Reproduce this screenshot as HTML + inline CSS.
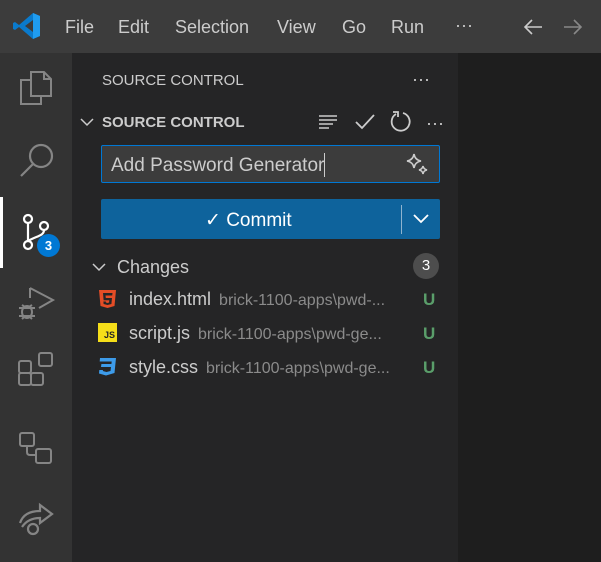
<!DOCTYPE html><html><head><style>
*{margin:0;padding:0;box-sizing:border-box}
body{width:601px;height:562px;overflow:hidden;background:#1e1e1e;font-family:"Segoe UI","Liberation Sans",sans-serif;position:relative;color:#ccc}
.a{position:absolute}
.t{font-size:18px;color:#ccc;top:17px}
svg{position:absolute;overflow:visible}
</style></head><body>
<div class="a" style="left:0;top:0;width:601px;height:53px;background:#3c3c3c"></div>
<svg style="left:13px;top:12px" width="28" height="28" viewBox="0 0 28 28"><path d="M20 1 L27 4 V24 L20 27 L6 15 L2 18 L0 17 V11 L2 10 L6 13 Z M20 8 L12 14 L20 20 Z" fill="#0a7acc"/><path d="M20 1 L27 4 V24 L20 27 Z" fill="#1f9cf0"/></svg>
<div class="a t" style="left:65px">File</div>
<div class="a t" style="left:118px">Edit</div>
<div class="a t" style="left:175px">Selection</div>
<div class="a t" style="left:277px">View</div>
<div class="a t" style="left:342px">Go</div>
<div class="a t" style="left:391px">Run</div>
<div class="a t" style="left:455px;top:15px">···</div>
<svg style="left:523px;top:18px" width="20" height="18"><path d="M19 9H2M9 2L2 9L9 16" stroke="#ccc" stroke-width="1.6" fill="none"/></svg>
<svg style="left:563px;top:18px" width="20" height="18"><path d="M1 9H18M11 2L18 9L11 16" stroke="#888" stroke-width="1.6" fill="none"/></svg>
<div class="a" style="left:0;top:53px;width:72px;height:509px;background:#333"></div>
<div class="a" style="left:72px;top:53px;width:386px;height:509px;background:#252526"></div>
<div class="a" style="left:0;top:197px;width:3px;height:71px;background:#fff"></div>
<svg style="left:19px;top:70px" width="34" height="36" stroke="#858585" stroke-width="2" fill="none"><path d="M12 2H25L32 9V26H12Z M25 2V9H32"/><path d="M12 10H2V34H22V26"/></svg>
<svg style="left:19px;top:142px" width="36" height="36" stroke="#858585" stroke-width="2.2" fill="none"><circle cx="22" cy="14" r="11"/><path d="M14 22L2 34"/></svg>
<svg style="left:22px;top:214px" width="30" height="36" stroke="#fff" stroke-width="2.2" fill="none"><circle cx="6" cy="5" r="4"/><circle cx="6" cy="31" r="4"/><circle cx="22" cy="12" r="4"/><path d="M6 9V27M22 16C22 22 14 22 6 27"/></svg>
<div class="a" style="left:37px;top:234px;width:23px;height:23px;border-radius:50%;background:#0078d4;color:#fff;font-size:13px;font-weight:bold;text-align:center;line-height:23px">3</div>
<svg style="left:17px;top:286px" width="38" height="36" stroke="#858585" stroke-width="2" fill="none"><path d="M13 2L36 14L22 22M13 2V12"/><ellipse cx="10" cy="26" rx="5" ry="6"/><path d="M2 22H18M2 30H18M5 19L8 21M15 19L12 21M5 33L7 31M15 33L13 31"/></svg>
<svg style="left:18px;top:352px" width="38" height="38" stroke="#858585" stroke-width="2" fill="none"><rect x="1" y="9" width="12" height="12" rx="2"/><rect x="1" y="21" width="12" height="12" rx="2"/><rect x="13" y="21" width="12" height="12" rx="2"/><rect x="21" y="1" width="13" height="13" rx="2"/></svg>
<svg style="left:19px;top:432px" width="36" height="36" stroke="#858585" stroke-width="2" fill="none"><rect x="1" y="1" width="14" height="13" rx="2"/><rect x="17" y="17" width="15" height="14" rx="2"/><path d="M8 14V20Q8 23 11 23H17"/></svg>
<svg style="left:18px;top:501px" width="38" height="36" stroke="#858585" stroke-width="2.2" fill="none"><path d="M2 22Q6 10 22 10V4L34 13L22 22V17Q10 17 4 26"/><circle cx="15" cy="28" r="5"/></svg>
<div class="a" style="left:102px;top:72px;font-size:15px;color:#ccc">SOURCE CONTROL</div>
<div class="a" style="left:412px;top:69px;font-size:18px;color:#ccc">···</div>
<svg style="left:80px;top:117px" width="14" height="10"><path d="M1 2L7 8L13 2" stroke="#ccc" stroke-width="1.5" fill="none"/></svg>
<div class="a" style="left:102px;top:114px;font-size:15px;font-weight:bold;color:#ccc">SOURCE CONTROL</div>
<svg style="left:318px;top:114px" width="20" height="16" stroke="#ccc" stroke-width="1.5"><path d="M1 2H19M1 6H19M1 10H15M1 14H11"/></svg>
<svg style="left:355px;top:113px" width="20" height="17"><path d="M1 9L7 15L19 2" stroke="#ccc" stroke-width="1.8" fill="none"/></svg>
<svg style="left:390px;top:111px" width="21" height="21" stroke="#ccc" stroke-width="1.8" fill="none"><path d="M6 3A9 9 0 1 0 13 2"/><path d="M3 1H8V6"/></svg>
<div class="a" style="left:426px;top:113px;font-size:18px;color:#ccc">···</div>
<div class="a" style="left:101px;top:145px;width:339px;height:38px;background:#3c3c3c;border:1px solid #0078d4;border-radius:2px"></div>
<div class="a" style="left:111px;top:155px;font-size:19px;color:#ccc">Add Password Generator</div>
<div class="a" style="left:324px;top:153px;width:1px;height:24px;background:#ccc"></div>
<svg style="left:406px;top:153px" width="24" height="22" stroke="#ccc" stroke-width="1.6" fill="none"><path d="M8 1Q9 7 15 8Q9 9 8 15Q7 9 1 8Q7 7 8 1Z"/><path d="M17 13Q17.5 16 21 17Q17.5 17.5 17 21Q16.5 17.5 13 17Q16.5 16 17 13Z"/></svg>
<div class="a" style="left:101px;top:199px;width:339px;height:40px;background:#0e639c;border-radius:2px"></div>
<div class="a" style="left:205px;top:209px;font-size:19px;color:#fff">✓ Commit</div>
<div class="a" style="left:401px;top:205px;width:1px;height:29px;background:#8fb4cf"></div>
<svg style="left:413px;top:214px" width="16" height="10"><path d="M1 1L8 8L15 1" stroke="#fff" stroke-width="1.8" fill="none"/></svg>
<svg style="left:92px;top:262px" width="14" height="10"><path d="M1 2L7 8L13 2" stroke="#ccc" stroke-width="1.5" fill="none"/></svg>
<div class="a" style="left:117px;top:257px;font-size:18px;color:#ccc">Changes</div>
<div class="a" style="left:413px;top:253px;width:26px;height:26px;border-radius:50%;background:#4d4d4d;color:#fff;font-size:15px;text-align:center;line-height:26px">3</div>
<svg style="left:98px;top:289px" width="19" height="20"><path d="M1 1H18L16.5 17L9.5 19L2.5 17Z" fill="#e44d26"/><path d="M5 4H14.5L14.2 6.5H7.5L7.8 9H14L13.4 15L9.5 16L5.6 15L5.4 12.5H7.8L7.9 13.5L9.5 14L11.1 13.5L11.3 11.3H5.6Z" fill="#252526"/></svg>
<div class="a" style="left:129px;top:289px;font-size:18px;color:#ccc">index.html <span style="font-size:16px;color:#8b8b8b;margin-left:3px">brick-1100-apps\pwd-...</span></div>
<div class="a" style="left:98px;top:323px;width:19px;height:19px;background:#f5de19;color:#252526;font-size:9px;font-weight:bold;padding:7px 0 0 6px;line-height:11px">JS</div>
<div class="a" style="left:129px;top:323px;font-size:18px;color:#ccc">script.js <span style="font-size:16px;color:#8b8b8b;margin-left:3px">brick-1100-apps\pwd-ge...</span></div>
<svg style="left:98px;top:357px" width="19" height="19"><path d="M2 1H18L16.5 16L8 18.5L1 16.5L1.3 13H5L4.8 14L8.5 15L12.5 14L13 10H3L3.4 7H13.4L13.7 4.5H1.7Z" fill="#3d9be9"/></svg>
<div class="a" style="left:129px;top:357px;font-size:18px;color:#ccc">style.css <span style="font-size:16px;color:#8b8b8b;margin-left:3px">brick-1100-apps\pwd-ge...</span></div>
<div class="a" style="left:423px;top:290px;font-size:17px;font-weight:bold;color:#5a9e6a">U</div>
<div class="a" style="left:423px;top:324px;font-size:17px;font-weight:bold;color:#5a9e6a">U</div>
<div class="a" style="left:423px;top:358px;font-size:17px;font-weight:bold;color:#5a9e6a">U</div>
</body></html>
